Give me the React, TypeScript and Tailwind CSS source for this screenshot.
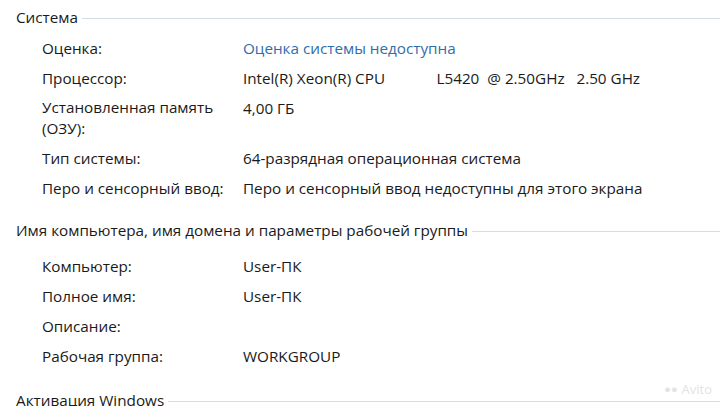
import React from 'react';

type Row = { label: React.ReactNode; value?: React.ReactNode; link?: boolean; tight?: boolean };

const systemRows: Row[] = [
  { label: 'Оценка:', value: 'Оценка системы недоступна', link: true },
  {
    label: 'Процессор:',
    value: (
      <span className="whitespace-pre">Intel(R) Xeon(R) CPU             L5420  @ 2.50GHz   2.50 GHz</span>
    ),
  },
  { label: 'Установленная память (ОЗУ):', value: '4,00 ГБ', tight: true },
  { label: 'Тип системы:', value: '64-разрядная операционная система' },
  { label: 'Перо и сенсорный ввод:', value: 'Перо и сенсорный ввод недоступны для этого экрана' },
];

const computerRows: Row[] = [
  { label: 'Компьютер:', value: 'User-ПК' },
  { label: 'Полное имя:', value: 'User-ПК' },
  { label: 'Описание:' },
  { label: 'Рабочая группа:', value: 'WORKGROUP' },
];

function Heading({ title }: { title: string }) {
  return (
    <div className="flex items-center gap-1 pl-4 pr-0 h-[22px]">
      <span className="whitespace-nowrap">{title}</span>
      <div className="flex-1 h-px bg-[#d6dde2] mt-[3px]" />
    </div>
  );
}

function Rows({ rows }: { rows: Row[] }) {
  return (
    <div className="flex flex-col gap-2 pl-[42px]">
      {rows.map((r, i) => (
        <div key={i} className="flex">
          <div className={`w-[201px] shrink-0 pr-4 ${r.tight ? 'leading-[21px]' : ''}`}>{r.label}</div>
          <div className={r.link ? 'text-[#2f6eaa]' : ''}>{r.value}</div>
        </div>
      ))}
    </div>
  );
}

export default function App() {
  return (
    <div
      className="relative w-[720px] h-[406px] overflow-hidden bg-white text-[#1a1a1a] text-[15.25px] leading-[22px]"
      style={{ fontFamily: '"Open Sans", "Noto Sans", sans-serif' }}
    >
      <div className="pt-[6px]">
        <Heading title="Система" />
        <div className="mt-[9px]">
          <Rows rows={systemRows} />
        </div>
        <div className="mt-[20px]">
          <Heading title="Имя компьютера, имя домена и параметры рабочей группы" />
        </div>
        <div className="mt-[14px]">
          <Rows rows={computerRows} />
        </div>
        <div className="mt-[22px]">
          <Heading title="Активация Windows" />
        </div>
      </div>
      <div className="absolute right-[8px] bottom-[6px] flex items-center gap-1 text-[13px] text-[#e3e3e3]">
        <span className="text-[11px]">●●</span>
        <span>Avito</span>
      </div>
    </div>
  );
}
